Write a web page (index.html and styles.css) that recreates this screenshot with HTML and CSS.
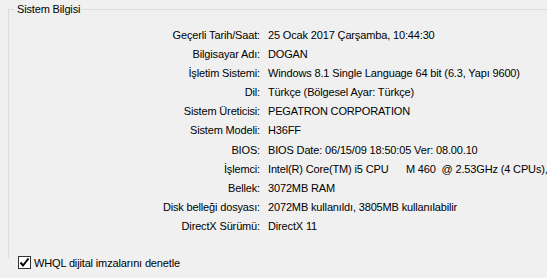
FILE: index.html
```html
<!DOCTYPE html>
<html>
<head>
<meta charset="utf-8">
<link rel="stylesheet" href="styles.css">
</head>
<body>
<fieldset class="group">
  <legend class="group-title">Sistem Bilgisi</legend>
  <div class="info">
    <div class="label">Geçerli Tarih/Saat:</div><div class="value">25 Ocak 2017 Çarşamba, 10:44:30</div>
    <div class="label">Bilgisayar Adı:</div><div class="value">DOGAN</div>
    <div class="label">İşletim Sistemi:</div><div class="value">Windows 8.1 Single Language 64 bit (6.3, Yapı 9600)</div>
    <div class="label">Dil:</div><div class="value">Türkçe (Bölgesel Ayar: Türkçe)</div>
    <div class="label">Sistem Üreticisi:</div><div class="value">PEGATRON CORPORATION</div>
    <div class="label">Sistem Modeli:</div><div class="value">H36FF</div>
    <div class="label">BIOS:</div><div class="value">BIOS Date: 06/15/09 18:50:05 Ver: 08.00.10</div>
    <div class="label">İşlemci:</div><div class="value">Intel(R) Core(TM) i5 CPU      M 460  @ 2.53GHz (4 CPUs),</div>
    <div class="label">Bellek:</div><div class="value">3072MB RAM</div>
    <div class="label">Disk belleği dosyası:</div><div class="value">2072MB kullanıldı, 3805MB kullanılabilir</div>
    <div class="label">DirectX Sürümü:</div><div class="value">DirectX 11</div>
  </div>
</fieldset>
<label class="check">
  <span class="box"><svg width="11" height="11" viewBox="0 0 11 11"><path d="M1.5 5.5 L4 8.5 L9.5 1.5" fill="none" stroke="#000" stroke-width="2"/></svg></span>
  <span class="check-text">WHQL dijital imzalarını denetle</span>
</label>
</body>
</html>
```
FILE: styles.css
```css
html, body {
  margin: 0;
  padding: 0;
  background: #f0f0f0;
  width: 547px;
  height: 278px;
  overflow: hidden;
  font-family: "Liberation Sans", Arial, sans-serif;
  font-size: 11px;
  letter-spacing: -0.15px;
  color: #000;
}
.group {
  margin: 3px -20px 0 8px;
  padding: 0;
  border: 1px solid #dcdcdc;
  border-right: none;
  border-bottom: none;
  height: 254px;
  min-width: 0;
}
.group-title {
  margin-left: 6px;
  padding: 0 2px;
  line-height: 13px;
}
.info {
  display: grid;
  grid-template-columns: 251px auto;
  column-gap: 8px;
  grid-auto-rows: 19.1px;
  line-height: 19px;
  margin-top: 10px;
  white-space: pre;
}
.label {
  text-align: right;
}
.check {
  display: flex;
  align-items: center;
  margin: -2px 0 0 18px;
}
.box {
  width: 11px;
  height: 11px;
  border: 1px solid #333;
  background: #fff;
  display: flex;
}
.check-text {
  margin-left: 3px;
}
```
